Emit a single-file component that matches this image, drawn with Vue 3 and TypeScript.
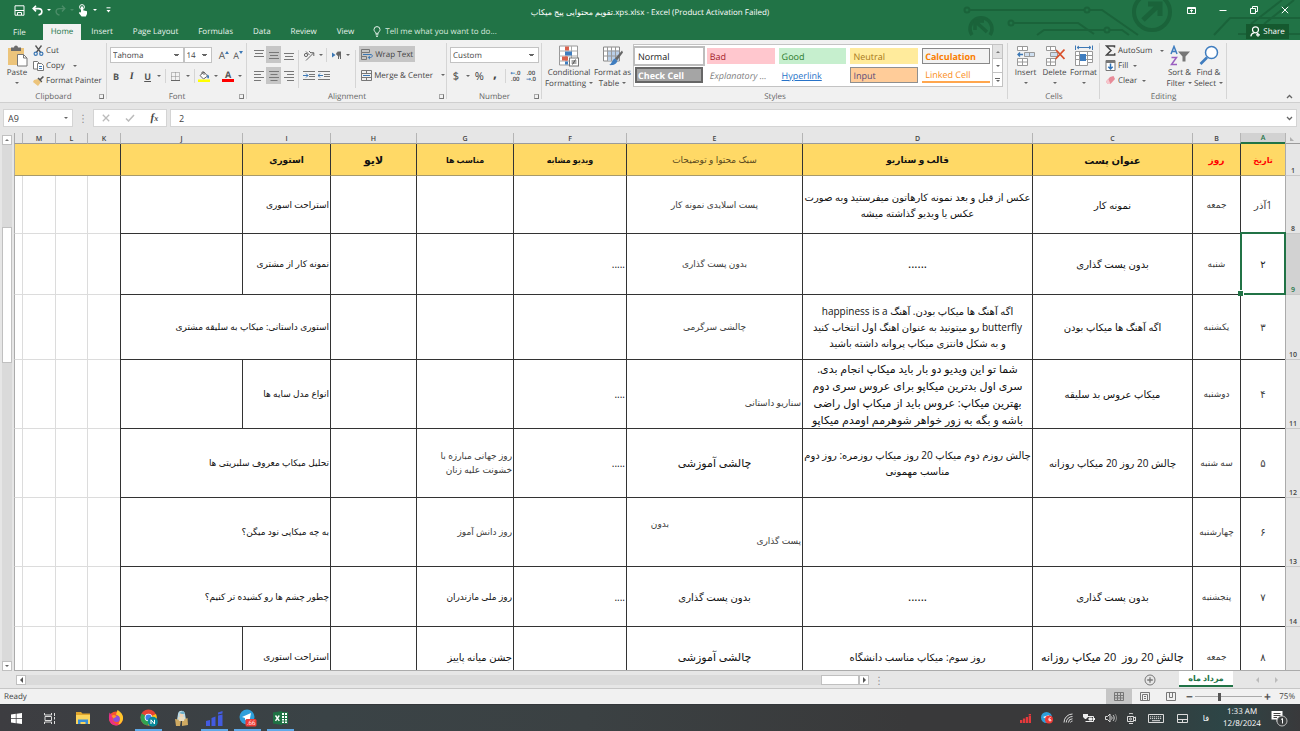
<script setup lang="ts">
import { ref } from 'vue'

interface Cell {
  lines: string[]
  cls?: string
  span?: number
}
interface Row {
  n: string
  h: number
  cells: Cell[]
}

const columns: { name: string; w: number }[] = [
  { name: 'A', w: 45 },
  { name: 'B', w: 48 },
  { name: 'C', w: 160 },
  { name: 'D', w: 230 },
  { name: 'E', w: 176 },
  { name: 'F', w: 113 },
  { name: 'G', w: 97 },
  { name: 'H', w: 86 },
  { name: 'I', w: 88 },
  { name: 'J', w: 122 },
  { name: 'K', w: 33 },
  { name: 'L', w: 32 },
  { name: 'M', w: 33 },
  { name: '', w: 8 },
]

const c = (text: string, cls = '', span = 1): Cell => ({ lines: text ? text.split('|') : [], cls, span })
const blank = (): Cell[] => [c('', 'faint'), c('', 'faint'), c('', 'faint'), c('', 'faint edge')]

const rows: Row[] = [
  {
    n: '1', h: 32,
    cells: [
      c('تاریخ', 'head red s8'), c('روز', 'head red s9'), c('عنوان پست', 'head s10'), c('قالب و سناریو', 'head s9'),
      c('سبک محتوا و توضیحات', 'yellow dim s9'), c('ویدیو مشابه', 'head s8'), c('مناسب ها', 'head s8'),
      c('لایو', 'head s11'), c('استوری', 'head s9'), c('', 'yellow'), c('', 'yellow edge', 4),
    ],
  },
  {
    n: '8', h: 58,
    cells: [
      c('1آذر', 's10 soft'), c('جمعه', 's9 soft'), c('نمونه کار', 's10'),
      c('عکس از قبل و بعد نمونه کارهاتون میفرستید وبه صورت|عکس یا ویدیو گذاشته میشه', 's10 l16'),
      c('پست اسلایدی نمونه کار', 's9 soft'), c(''), c(''), c(''), c('استراحت اسوری', 's9 start'), c(''), ...blank(),
    ],
  },
  {
    n: '9', h: 61,
    cells: [
      c('۲', 's10 selected'), c('شنبه', 's9 soft'), c('بدون پست گذاری', 's10'), c('......', 's12'),
      c('بدون پست گذاری', 's9 soft'), c('.....', 's10 start'), c(''), c(''), c('نمونه کار از مشتری', 's9 start'), c(''), ...blank(),
    ],
  },
  {
    n: '10', h: 65,
    cells: [
      c('۳', 's10 soft'), c('یکشنبه', 's9 soft'), c('اگه آهنگ ها میکاپ بودن', 's10'),
      c('اگه آهنگ ها میکاپ بودن. آهنگ happiness is a|butterfly رو میتونید به عنوان اهنگ اول انتخاب کنید|و به شکل فانتزی میکاپ پروانه داشته باشید', 's10 l16'),
      c('چالشی سرگرمی', 's9 soft'), c(''), c(''), c(''), c('استوری داستانی: میکاپ به سلیقه مشتری', 's9 start', 2), ...blank(),
    ],
  },
  {
    n: '11', h: 69,
    cells: [
      c('۴', 's10 soft'), c('دوشنبه', 's9 soft'), c('میکاپ عروس بد سلیقه', 's10'),
      c('شما تو این ویدیو دو بار باید میکاپ انجام بدی.|سری اول بدترین میکاپو برای عروس سری دوم|بهترین میکاپ: عروس باید از میکاپ اول راضی|باشه و بگه به زور خواهر شوهرمم اومدم میکاپو', 's11 l17'),
      c('\u00a0|سناریو داستانی', 's9 soft start l17'), c('....', 's10 start'), c(''), c(''), c('انواع مدل سایه ها', 's9 start'), c(''), ...blank(),
    ],
  },
  {
    n: '12', h: 69,
    cells: [
      c('۵', 's10 soft'), c('سه شنبه', 's9 soft'), c('چالش 20 روز 20 میکاپ روزانه', 's10'),
      c('چالش روزم دوم میکاپ 20 روز میکاپ روزمره: روز دوم|مناسب مهمونی', 's10 l16'),
      c('چالشی آموزشی', 's11'), c('.....', 's10 start'), c('روز جهانی مبارزه با|خشونت علیه زنان', 's9 soft start l14'),
      c(''), c('تحلیل میکاپ معروف سلبریتی ها', 's9 start', 2), ...blank(),
    ],
  },
  {
    n: '13', h: 69,
    cells: [
      c('۶', 's10 soft'), c('چهارشنبه', 's9 soft'), c(''), c(''),
      c('بدون|پست گذاری', 's9 soft start l17 indent'), c(''), c('روز دانش آموز', 's9 soft start'), c(''),
      c('به چه میکاپی نود میگن؟', 's9 start', 2), ...blank(),
    ],
  },
  {
    n: '14', h: 60,
    cells: [
      c('۷', 's10 soft'), c('پنجشنبه', 's9 soft'), c('بدون پست گذاری', 's10'), c('......', 's12'),
      c('بدون پست گذاری', 's10'), c('....', 's10 start'), c('روز ملی مازندران', 's9 start'), c(''),
      c('چطور چشم ها رو کشیده تر کنیم؟', 's9 start', 2), ...blank(),
    ],
  },
  {
    n: '', h: 60,
    cells: [
      c('۸', 's10 soft'), c('جمعه', 's9 soft'), c('چالش 20 روز\u00a0 20 میکاپ روزانه', 's11'),
      c('روز سوم: میکاپ مناسب دانشگاه', 's10'), c('چالشی آموزشی', 's11'), c(''), c('جشن میانه پاییز', 's10 start'), c(''),
      c('استراحت استوری', 's9 start'), c(''), ...blank(),
    ],
  },
]

const tabs = ['File', 'Home', 'Insert', 'Page Layout', 'Formulas', 'Data', 'Review', 'View']
const activeTab = ref('Home')
const swatches: { t: string; k: string }[] = [
  { t: 'Normal', k: 'normal' }, { t: 'Bad', k: 'bad' }, { t: 'Good', k: 'good' }, { t: 'Neutral', k: 'neutral' }, { t: 'Calculation', k: 'calc' },
  { t: 'Check Cell', k: 'check' }, { t: 'Explanatory ...', k: 'expl' }, { t: 'Hyperlink', k: 'hyper' }, { t: 'Input', k: 'inp' }, { t: 'Linked Cell', k: 'linked' },
]
const nameBox = ref('A9')
const formula = ref('2')
const zoom = ref(36)
</script>

<template>
  <div class="app">
    <header class="top">
      <svg class="circuit" width="340" height="40" viewBox="0 0 340 40" fill="none" stroke="#1a633a" stroke-width="2" aria-hidden="true">
        <circle cx="7" cy="10" r="2.5" /><path d="M10 10H124M130 10H142L178 35" /><circle cx="127" cy="10" r="2.5" />
        <circle cx="51" cy="23" r="2.5" /><path d="M54 23H118L134 34M77 35L84 30H144M150 30H162L169 35" /><circle cx="147" cy="30" r="2.5" />
        <path d="M12 35A11 11 0 1 1 30 35" stroke-width="3.5" /><path d="M27 32L16 22M15 30V21H24" stroke-width="3.5" />
        <circle cx="192" cy="12" r="18" stroke-width="4" /><path d="M183 20L200 4M188 4H200V16" stroke-width="5" />
        <path d="M254 35L270 18H340M291 24L322 0M304 24L334 0M278 34H340" />
      </svg>
      <div class="titlebar">
        <div class="quick">
          <button aria-label="Save"><svg width="11" height="11" viewBox="0 0 11 11" fill="none" stroke="#fff"><path d="M1 .8H10V10.2H1ZM1 5.5H10M3.5 10V7.5H7.5V10" /></svg></button>
          <button aria-label="Undo"><svg width="11" height="11" viewBox="0 0 11 11" fill="none" stroke="#fff" stroke-width="1.6"><path d="M4 .8L1.2 3.6L4 6.4M1.5 3.6H6.5C11 3.6 11 9.5 6.5 10" /></svg></button>
          <i class="caret light"></i>
          <button aria-label="Redo" class="off"><svg width="11" height="11" viewBox="0 0 11 11" fill="none" stroke="#4b8d68" stroke-width="1.4"><path d="M7 .8L9.8 3.6L7 6.4M9.5 3.6H4.5C0 3.6 0 9.5 4.5 10" /></svg></button>
          <i class="caret dull"></i>
          <button aria-label="Touch mode"><svg width="11" height="13" viewBox="0 0 11 13"><circle cx="4" cy="3" r="2.4" fill="none" stroke="#fff" /><path d="M3 2.5H5.1V6.2L9 7.2V10L7.8 12.6H3.6L.8 9L2 7.8L3 8.7Z" fill="#fff" /></svg></button>
          <i class="caret light"></i>
          <button class="custom" aria-label="Customize"><svg width="5" height="6" viewBox="0 0 5 6"><path d="M.5 .8H4.5" stroke="#fff" /><path d="M.5 3H4.5L2.5 5.4Z" fill="#fff" /></svg></button>
        </div>
        <div class="title">تقویم محتوایی پیج میکاپ.xps.xlsx - Excel (Product Activation Failed)</div>
        <div class="winbtns">
          <button aria-label="Ribbon options"><svg width="9" height="7" viewBox="0 0 9 7" fill="none" stroke="#fff"><path d="M.5 .5H8.5V6.5H.5ZM.5 1.5H8.5M4.5 5.5V3M3 4L4.5 2.8L6 4" /></svg></button>
          <button aria-label="Minimize"><svg width="8" height="8" viewBox="0 0 8 8"><path d="M.5 4.5H7.5" stroke="#fff" /></svg></button>
          <button aria-label="Restore"><svg width="8" height="8" viewBox="0 0 8 8" fill="none" stroke="#fff"><path d="M.5 2.5H5.5V7.5H.5ZM2.5 2V.5H7.5V5.5H6" /></svg></button>
          <button aria-label="Close"><svg width="8" height="8" viewBox="0 0 8 8"><path d="M.8 .8L7.2 7.2M7.2 .8L.8 7.2" stroke="#fff" /></svg></button>
        </div>
      </div>
      <nav class="tabs">
        <button v-for="t in tabs" :key="t" :class="['tab', { on: t === activeTab, file: t === 'File' }]" @click="activeTab = t">{{ t }}</button>
        <button class="tell"><svg width="8" height="11" viewBox="0 0 8 11" fill="none" stroke="#e8f2ec"><path d="M2.6 7.3C2.6 5.8 1 5.4 1 3.6A3 3 0 0 1 7 3.6C7 5.4 5.4 5.8 5.4 7.3ZM2.6 8.8H5.4M3 10.3H5" /></svg>Tell me what you want to do...</button>
        <button class="share"><svg width="11" height="11" viewBox="0 0 11 11" fill="none" stroke="#fff" stroke-width="1.2"><circle cx="5.5" cy="3.8" r="3" /><path d="M.8 10.4C1.2 8 3 6.8 4.5 6.6M6.5 6.6L8 7.8M8 6.8V10.8M6 8.8H10" /></svg>Share</button>
      </nav>
    </header>

    <section class="ribbon">
      <div class="group g-clip">
        <div class="body">
          <button class="big paste">
            <svg width="21" height="22" viewBox="0 0 21 22"><rect x="1" y="3" width="16" height="17" fill="#ecc47b" /><path d="M4 2.5H7C7-.3 11-.3 11 2.5H14V6H4Z" fill="#6b6b6b" /><path d="M10.5 9.5H16.5L20 13V21H10.5Z" fill="#fff" stroke="#777" /><path d="M16.5 9.5V13H20" fill="none" stroke="#777" /></svg>
            <span>Paste</span><i class="caret"></i>
          </button>
          <div class="stack">
            <button class="mini"><svg width="10" height="11" viewBox="0 0 10 11" fill="none"><path d="M2 .5L7.2 7.5M8 .5L2.8 7.5" stroke="#555" stroke-width="1.3" /><circle cx="2.2" cy="8.8" r="1.6" stroke="#3c78b5" stroke-width="1.2" /><circle cx="7.8" cy="8.8" r="1.6" stroke="#3c78b5" stroke-width="1.2" /></svg>Cut</button>
            <button class="mini"><svg width="11" height="10" viewBox="0 0 11 10" fill="#fff" stroke="#777"><path d="M.5 .5H4.5L6 2V8H.5Z" /><path d="M4.5 2.5H8.5L10.5 4.5V9.5H4.5Z" /><path d="M6 5.5H9M6 7.5H9" stroke="#3c78b5" /></svg>Copy<i class="caret gap"></i></button>
            <button class="mini"><svg width="11" height="10" viewBox="0 0 11 10"><path d="M1 4L5 3L8 6L5 10L0 6Z" fill="#ecc47b" /><path d="M4.5 2.5L8.5 6.5L9.3 5.6L8 4L11 1L9.8 0L7 2.8L5.5 1.5Z" fill="#555" /></svg>Format Painter</button>
          </div>
        </div>
        <footer>Clipboard</footer><i class="launch"></i>
      </div>

      <div class="group g-font">
        <div class="body rowsbody">
          <div class="line">
            <select class="combo w74" aria-label="Font"><option>Tahoma</option></select>
            <select class="combo w29" aria-label="Font size"><option>14</option></select>
            <button class="ic wide" aria-label="Increase font size"><b class="bigA">A</b><svg width="4" height="9" viewBox="0 0 4 9"><path d="M0 3L2 0L4 3Z" fill="#3c78b5" /></svg></button>
            <button class="ic" aria-label="Decrease font size"><b class="smallA">A</b><svg width="4" height="9" viewBox="0 0 4 9"><path d="M0 0H4L2 3Z" fill="#3c78b5" /></svg></button>
          </div>
          <div class="line second">
            <button class="ic"><b>B</b></button><button class="ic"><em>I</em></button><button class="ic"><u>U</u></button><i class="caret"></i><i class="vs"></i>
            <button class="ic" aria-label="Borders"><svg width="9" height="9" viewBox="0 0 9 9" fill="none"><path d="M.5 .5H8.5V8.5H.5ZM4.5 .5V8.5M.5 4.5H8.5" stroke="#888" stroke-dasharray="1 1" /><path d="M0 8.5H9" stroke="#666" /></svg></button><i class="caret"></i><i class="vs"></i>
            <button class="ic" aria-label="Fill color"><svg width="12" height="11" viewBox="0 0 12 11"><path d="M2 4.5L6 1L9.5 5L5.5 8Z" fill="#fff" stroke="#666" /><path d="M4 3V1H6V4" fill="none" stroke="#666" /><path d="M9.5 3.5C12 5 11 7.5 10 7.5C9 7.5 9 5 9.5 3.5Z" fill="#3c78b5" /><rect y="8.5" width="12" height="2.5" fill="#ff0" /></svg></button><i class="caret"></i>
            <button class="ic fontcolor"><b>A</b></button><i class="caret"></i>
          </div>
        </div>
        <footer>Font</footer><i class="launch"></i>
      </div>

      <div class="group g-align">
        <div class="body alignbody">
          <div class="pad3">
            <button class="ic a" aria-label="Top align"><svg width="10" height="10" viewBox="0 0 10 10" stroke="#777"><path d="M0 .5H10M1 3.5H9M0 6.5H10" /></svg></button>
            <button class="ic a sel" aria-label="Middle align"><svg width="10" height="10" viewBox="0 0 10 10" stroke="#777"><path d="M0 2.5H10M1 5.5H9M0 8.5H10" /></svg></button>
            <button class="ic a" aria-label="Bottom align"><svg width="10" height="10" viewBox="0 0 10 10" stroke="#777"><path d="M0 3.5H10M1 6.5H9M0 9.5H10" /></svg></button>
            <button class="ic a" aria-label="Align left"><svg width="10" height="10" viewBox="0 0 10 10" stroke="#777"><path d="M0 .5H10M0 3.5H7M0 6.5H10M0 9.5H7" /></svg></button>
            <button class="ic a sel" aria-label="Center"><svg width="10" height="10" viewBox="0 0 10 10" stroke="#777"><path d="M0 .5H10M1.5 3.5H8.5M0 6.5H10M1.5 9.5H8.5" /></svg></button>
            <button class="ic a" aria-label="Align right"><svg width="10" height="10" viewBox="0 0 10 10" stroke="#777"><path d="M0 .5H10M3 3.5H10M0 6.5H10M3 9.5H10" /></svg></button>
          </div>
          <i class="vs tall"></i>
          <div class="mid">
            <div class="line">
              <button class="ic" aria-label="Orientation"><svg width="12" height="11" viewBox="0 0 12 11" fill="none" stroke="#666"><path d="M3 10.5L10.5 3M10.8 6V2.700H7.500" /><circle cx="3" cy="5" r="1.600" /><path d="M3 1.500L6.500 5M6 1L8 3" /></svg></button><i class="caret"></i>
              <i class="vs"></i>
              <button class="ic" aria-label="Text direction"><svg width="11" height="9" viewBox="0 0 11 9"><path d="M1 1.500V6.500L4.500 4Z" fill="#3c78b5" /><path d="M7.500 8V1H10M9.500 8V1M7.500 1C5 1 5 4.500 7.500 4.500Z" stroke="#666" fill="#666" /></svg></button><i class="caret"></i>
            </div>
            <div class="line second">
              <button class="ic" aria-label="Decrease indent"><svg width="12" height="9" viewBox="0 0 12 9" stroke="#777"><path d="M0 .5H12M6 3.500H12M6 5.500H12M0 8.500H12" /><path d="M0 4.500H5M3 2.500L5 4.500L3 6.500" stroke="#3c78b5" fill="none" /></svg></button>
              <button class="ic" aria-label="Increase indent"><svg width="12" height="9" viewBox="0 0 12 9" stroke="#777"><path d="M0 .5H12M6 3.500H12M6 5.500H12M0 8.500H12" /><path d="M5 4.500H0M2 2.500L0 4.500L2 6.500" stroke="#3c78b5" fill="none" /></svg></button>
            </div>
          </div>
          <i class="vs tall"></i>
          <div class="wraps">
            <button class="mini sel"><svg width="12" height="11" viewBox="0 0 12 11" fill="none" stroke="#777"><path d="M.5 .5H8.500V3.500H.5ZM.5 3.500V10.500H5.500V7.500H.5" /><path d="M2 5.500H10C12 5.500 11.500 8.500 9.500 8.500H7.500M9 6.800L7.300 8.500L9 10.200" stroke="#3c78b5" /></svg>Wrap Text</button>
            <button class="mini"><svg width="11" height="11" viewBox="0 0 11 11" fill="none" stroke="#777"><path d="M.5 .5H10.500V10.500H.5ZM.5 3.500H10.500M.5 7.500H10.500M5.500 .5V3.500M5.500 7.500V10.500" /><path d="M2 5.500H9" stroke="#3c78b5" /></svg>Merge &amp; Center<i class="caret gap"></i></button>
          </div>
        </div>
        <footer>Alignment</footer><i class="launch"></i>
      </div>

      <div class="group g-num">
        <div class="body rowsbody">
          <div class="line"><select class="combo full" aria-label="Number format"><option>Custom</option></select></div>
          <div class="line second nums">
            <button class="ic sym">$</button><i class="caret"></i><button class="ic sym">%</button><button class="ic comma">,</button><i class="vs"></i>
            <button class="ic dec"><span><i class="blue">←</i>.0</span><span>.00</span></button>
            <button class="ic dec"><span>.00</span><span><i class="blue">→</i>.0</span></button>
          </div>
        </div>
        <footer>Number</footer><i class="launch"></i>
      </div>

      <div class="group g-styles">
        <div class="body">
          <button class="big w46"><svg width="20" height="21" viewBox="0 0 20 21"><path d="M.5 .5H18.500V19.500H.5Z" fill="#fff" stroke="#999" /><path d="M.5 5.500H18.500M.5 10.500H18.500M.5 15.500H18.500M12.500 .5V19.500" stroke="#aaa" /><path d="M6 1H10V5H6ZM3 11H8V15H3Z" fill="#d9614c" /><path d="M6 6H13V10H6Z" fill="#3f7dbf" /><path d="M6 11H9V15H6ZM6 1V19" fill="#d9614c" /><path d="M6 16H9V19H6Z" fill="#3f7dbf" /><rect x="10.500" y="12.500" width="9" height="8" fill="#fff" stroke="#777" /><path d="M12.500 15.500H17.500M12.500 17.500H17.500M16.500 14L13.500 19" stroke="#555" /></svg><span>Conditional</span><span>Formatting<i class="caret gap2"></i></span></button>
          <button class="big w40"><svg width="20" height="21" viewBox="0 0 20 21"><path d="M.5 1.500H16.500V15.500H.5Z" fill="#fff" stroke="#888" /><path d="M4 5H16V15H4Z" fill="#b9cfe8" /><path d="M.5 5.500H16.500M.5 10.500H16.500M4.500 1.500V15.500M8.500 1.500V15.500M12.500 1.500V15.500" stroke="#999" /><path d="M19 5L20 7L14 15L12 13Z" fill="#666" /><path d="M12 13L14.500 15.500C13 19.500 9 20 6 19.500C9 18.500 9 14 12 13Z" fill="#3f7dbf" /></svg><span>Format as</span><span>Table<i class="caret gap2"></i></span></button>
          <div class="gallery">
            <div class="swatches"><button v-for="s in swatches" :key="s.t" :class="['sw', s.k]">{{ s.t }}</button></div>
            <div class="galbtns"><button class="dis" aria-label="Scroll up"><i class="caret up"></i></button><button aria-label="Scroll down"><i class="caret"></i></button><button aria-label="More styles"><i class="bar"></i><i class="caret"></i></button></div>
          </div>
        </div>
        <footer>Styles</footer>
      </div>

      <div class="group g-cells">
        <div class="body">
          <button class="big w29"><svg width="19" height="20" viewBox="0 0 19 20" fill="#fff" stroke="#999"><path d="M1.500 .5H11.500V4.500H1.500ZM6.500 .5V4.500M1.500 12.500H11.500V19.500H1.500ZM6.500 12.500V19.500M1.500 16H11.500" /><path d="M8.500 6.500H18.500V10.500H8.500ZM13.500 6.500V10.500" fill="#cfdff0" /><path d="M7 8.500H2M4 6.500L2 8.500L4 10.500" stroke="#3c78b5" stroke-width="1.400" fill="none" /></svg><span>Insert</span><i class="caret"></i></button>
          <button class="big w29"><svg width="20" height="20" viewBox="0 0 20 20" fill="#fff" stroke="#999"><path d="M1.500 .5H10.500V4.500H1.500ZM5.500 .5V4.500M1.500 12.500H10.500V19.500H1.500ZM5.500 12.500V19.500M1.500 16H10.500" /><path d="M5.500 6.500H12.500V10.500H5.500Z" fill="#cfdff0" /><path d="M11 4L19.500 13M19.500 3.500L10.500 13" stroke="#d9512c" stroke-width="1.800" /></svg><span>Delete</span><i class="caret"></i></button>
          <button class="big w29"><svg width="20" height="22" viewBox="0 0 20 22" fill="#fff" stroke="#999"><path d="M1.500 6.500H18.500V17.500H13.500V20.500H1.500ZM1.500 10.500H18.500M1.500 14.500H18.500M5.500 6.500V20.500M13.500 6.500V17.500" /><rect x="6" y="9" width="6" height="7" fill="#3f7dbf" stroke="none" /><path d="M1.500 .5V5M18.500 .5V5M3 2.500H17M5 1L3 2.500L5 4M15 1L17 2.500L15 4" stroke="#3c78b5" fill="none" /></svg><span>Format</span><i class="caret"></i></button>
        </div>
        <footer>Cells</footer>
      </div>

      <div class="group g-edit">
        <div class="body">
          <div class="stack edits">
            <button class="mini"><svg width="10" height="11" viewBox="0 0 10 11" fill="none" stroke="#444" stroke-width="1.500"><path d="M9 2.500V1H1L5.500 5.500L1 10H9.200V8.200" /></svg>AutoSum<i class="caret gap"></i></button>
            <button class="mini"><svg width="10" height="11" viewBox="0 0 10 11" fill="#fff" stroke="#777"><path d="M.5 .5H9.500V10.500H.5Z" /><path d="M.5 2H9.500" stroke-width="2" /><path d="M5 3.500V9M2.800 6.700L5 9L7.200 6.700" stroke="#2f72b8" stroke-width="1.500" fill="none" /></svg>Fill<i class="caret gap2"></i></button>
            <button class="mini"><svg width="10" height="9" viewBox="0 0 10 9"><path d="M4.500 1L8 0L9.500 3L5 8H2L.5 5.500Z" fill="#e88b98" /><path d="M.5 5.500L2 8H5L2.800 3Z" fill="#f6c7cd" /></svg>Clear<i class="caret gap2"></i></button>
          </div>
          <button class="big w29"><svg width="20" height="21" viewBox="0 0 20 21" fill="none"><path d="M1 8.500L4 1L7 8.500M2 6H6" stroke="#3f7dbf" stroke-width="1.500" /><path d="M1.500 12H6.500L1.500 19H7" stroke="#9a5fc0" stroke-width="1.500" /><path d="M8 6H20L15.500 11V16H12.500V11Z" fill="#777" /></svg><span>Sort &amp;</span><span>Filter<i class="caret gap2"></i></span></button>
          <button class="big w30"><svg width="20" height="21" viewBox="0 0 20 21" fill="none"><circle cx="12.500" cy="7" r="6" stroke="#3f7dbf" stroke-width="1.500" fill="#fff" /><path d="M8 12L1.500 18.500" stroke="#3f7dbf" stroke-width="2.600" /></svg><span>Find &amp;</span><span>Select<i class="caret gap2"></i></span></button>
        </div>
        <footer>Editing</footer>
      </div>
      <div class="tail"><button aria-label="Collapse the ribbon"><svg width="7" height="5" viewBox="0 0 7 5" fill="none" stroke="#666" stroke-width="1.300"><path d="M1 4L3.500 1.500L6 4" /></svg></button></div>
    </section>

    <section class="fbar">
      <div class="namebox"><input v-model="nameBox" aria-label="Name box" /><i class="caret"></i></div>
      <span class="dots">⋮</span>
      <div class="fbtns">
        <button aria-label="Cancel"><svg width="8" height="8" viewBox="0 0 8 8"><path d="M.8 .8L7.200 7.200M7.200 .8L.8 7.200" stroke="#bbb" stroke-width="1.300" /></svg></button>
        <button aria-label="Enter"><svg width="10" height="8" viewBox="0 0 10 8"><path d="M1 4.500L3.500 7L9 1" stroke="#bbb" stroke-width="1.500" fill="none" /></svg></button>
        <button class="fx" aria-label="Insert function">f<sub>x</sub></button>
      </div>
      <div class="formula"><input v-model="formula" aria-label="Formula" /><svg width="7" height="5" viewBox="0 0 7 5" fill="none" stroke="#666" stroke-width="1.300"><path d="M1 1L3.500 3.500L6 1" /></svg></div>
    </section>

    <main class="sheet">
      <div class="vscroll"><button aria-label="Scroll up"><i class="caret up"></i></button><span class="before"></span><span class="thumb"></span><span class="after"></span><button aria-label="Scroll down"><i class="caret"></i></button></div>
      <div class="gridwrap">
        <table dir="rtl">
          <colgroup><col style="width: 15px" /><col v-for="(col, i) in columns" :key="i" :style="{ width: col.w + 'px' }" /></colgroup>
          <thead><tr><th class="corner"></th><th v-for="(col, i) in columns" :key="i" :class="{ cur: col.name === 'A' }">{{ col.name }}</th></tr></thead>
          <tbody>
            <tr v-for="(r, ri) in rows" :key="ri" :style="{ height: r.h + 'px' }">
              <th :class="{ cur: r.n === '9' }">{{ r.n }}</th>
              <td v-for="(cell, i) in r.cells" :key="i" :class="cell.cls" :colspan="cell.span">
                <div v-for="(l, k) in cell.lines" :key="k" class="ln">{{ l }}</div>
              </td>
            </tr>
          </tbody>
        </table>
      </div>
    </main>

    <div class="sheetbar">
      <div class="hscroll"><button aria-label="Scroll left"><i class="caret left"></i></button><span class="track"></span><span class="hthumb"></span><button aria-label="Scroll right"><i class="caret right"></i></button></div>
      <span class="dots hd">⋮</span>
      <button class="add" aria-label="New sheet"><svg width="12" height="12" viewBox="0 0 12 12" fill="none" stroke="#777"><circle cx="6" cy="6" r="5" /><path d="M6 3.200V8.800M3.200 6H8.800" stroke-width="1.300" /></svg></button>
      <button class="stab">مرداد ماه</button>
      <span class="navs"><i class="caret left pale"></i><i class="caret right pale"></i></span>
    </div>

    <div class="status">
      <span class="ready">Ready</span>
      <button class="view on" aria-label="Normal view"><svg width="10" height="9" viewBox="0 0 10 9" fill="none" stroke="#777"><path d="M.5 .5H9.500V8.500H.5ZM3.500 .5V8.500M6.500 .5V8.500M.5 3.500H9.500M.5 6H9.500" /></svg></button>
      <button class="view" aria-label="Page layout view"><svg width="10" height="9" viewBox="0 0 10 9" fill="none" stroke="#777"><path d="M.5 .5H9.500V8.500H.5ZM2.500 2.500H7.500V8.500M2.500 2.500V8.500M4 4.500H6M4 6.500H6" /></svg></button>
      <button class="view" aria-label="Page break view"><svg width="10" height="9" viewBox="0 0 10 9" fill="none" stroke="#777"><path d="M.5 8.500V.5H9.500V8.500ZM3.500 .5V5.500H6.500V.5" /></svg></button>
      <button class="zb" aria-label="Zoom out">−</button>
      <input v-model="zoom" class="range" type="range" min="0" max="100" aria-label="Zoom" />
      <button class="zb" aria-label="Zoom in">+</button>
      <span class="pct">75%</span>
    </div>

    <footer class="taskbar">
      <div class="apps">
        <button aria-label="Start"><svg width="11" height="11" viewBox="0 0 11 11" fill="#fff"><path d="M0 1.500L4.800 .8V5.200H0ZM5.500 .7L11 0V5.200H5.500ZM0 5.900H4.800V10.300L0 9.600ZM5.500 5.900H11V11L5.500 10.300Z" /></svg></button>
        <button aria-label="Task view"><svg width="12" height="11" viewBox="0 0 12 11" fill="none" stroke="#ddd"><path d="M.5 0V2H7.500V0M.5 11V9H7.500V11M1 3.500H7.500V7.500H1ZM10.500 0V3M10.500 4V6.500M10.500 8V11" /></svg></button>
        <button aria-label="File Explorer"><svg width="16" height="14" viewBox="0 0 16 14"><path d="M1 1H6L7.500 2.500H15V13H1Z" fill="#e0a52c" /><path d="M1 4H15V13H1Z" fill="#fbd45c" /><path d="M3 13V8.500H13V13H10.500V11H5.500V13Z" fill="#3a8fd6" /></svg></button>
        <button aria-label="Firefox"><svg width="16" height="16" viewBox="0 0 16 16"><circle cx="8" cy="8.500" r="7" fill="#f7532f" /><path d="M9.500 0C13 2 15.500 5 15 9C14.500 12 12.500 14 10 15C13 10 12 6 8 4.500Z" fill="#ffc62b" /><path d="M1.500 2.500C1 5 .5 8 1.500 11C3 15 8 16.500 11.500 14.500C7 15 3 11 5 6L3.500 5Z" fill="#e8308a" /><circle cx="8.500" cy="8.700" r="3.300" fill="#8a4fe0" /><path d="M3.500 6C5 4.500 7 5 8.500 6.500L5.500 8.500Z" fill="#ff9528" /></svg></button>
        <button class="open" aria-label="Chrome"><svg width="18" height="18" viewBox="0 0 18 18"><circle cx="8.500" cy="8.500" r="8" fill="#e64335" /><path d="M8.500 8.500L1.600 4.500A8 8 0 0 0 8.500 16.500Z" fill="#32a350" /><path d="M8.500 8.500L16 5A8 8 0 0 1 8.500 16.500Z" fill="#fbc116" /><circle cx="8.500" cy="8.500" r="3.800" fill="#fff" /><circle cx="8.500" cy="8.500" r="3" fill="#3e7fe8" /><circle cx="12.800" cy="12.800" r="5" fill="#08899a" /><path d="M11 15V10.800L14.500 15V10.800" stroke="#fff" fill="none" /></svg></button>
        <button aria-label="Store"><svg width="15" height="17" viewBox="0 0 15 17"><path d="M4 4C4-.5 11-.5 11 4L12 10H3Z" fill="#b9dce9" /><circle cx="7.500" cy="5" r="2.200" fill="#f1d2b4" /><path d="M5 3L9 1L11 4L8 4Z" fill="#6daec9" /><path d="M1 9L7 10L6 16H2ZM8 10L13.500 8L14 15L8 16Z" fill="#cfaa62" /><path d="M4 7H11L10 11H5Z" fill="#e8dcc0" /></svg></button>
        <button class="open" aria-label="Signal"><svg width="17" height="15" viewBox="0 0 17 15" fill="#435be0"><path d="M0 10L4 9V15H0ZM5.500 7L9.500 5.500V15H5.500ZM12 4.500L16.500 3.500V15H12ZM12 1.500L16.500 0V2.500L12 3.500Z" /></svg></button>
        <button class="open" aria-label="Telegram"><svg width="18" height="18" viewBox="0 0 18 18"><circle cx="8" cy="8" r="7.500" fill="#2e9fdb" /><path d="M3 8L12 4L10.500 12L7.500 10L6 11.500V9Z" fill="#fff" /><rect x="6.500" y="10" width="11" height="7.500" rx="1.500" fill="#ee3b36" /></svg><span class="badge">.66</span></button>
        <button class="open" aria-label="Excel"><svg width="15" height="14" viewBox="0 0 15 14"><path d="M8 1.500H14.500V12.500H8Z" fill="#fff" stroke="#1f7244" /><path d="M8 4.500H14M8 7.500H14M8 10H14M11.500 2V12" stroke="#1f7244" /><path d="M0 1.500L9 0V14L0 12.500Z" fill="#1f7244" /><path d="M2.500 4.500L6.300 9.800M6.300 4.500L2.500 9.800" stroke="#fff" stroke-width="1.400" /></svg></button>
      </div>
      <div class="tray">
        <svg width="11" height="9" viewBox="0 0 11 9" fill="#e5393c"><path d="M0 6H2.300V9H0ZM2.900 4.500H5.200V9H2.900ZM5.800 3H8.100V9H5.800ZM8.700 1.800H11V9H8.700ZM8.700 0H11V1.200H8.700Z" /></svg>
        <svg width="12" height="12" viewBox="0 0 12 12"><circle cx="5.500" cy="5.500" r="5.500" fill="#2e9fdb" /><path d="M2 5L8 3L7 8Z" fill="#fff" /><circle cx="8" cy="7.500" r="4" fill="#ee3b36" /><path d="M9.500 5.500C7.500 5.500 7.500 9 9 9C10.500 9 10 7 8.500 7.500" fill="none" stroke="#fff" /></svg>
        <svg width="10" height="10" viewBox="0 0 10 10" fill="none" stroke="#ddd"><path d="M1 9.500A8.500 8.500 0 0 1 9.500 1M3.200 9.500A6.300 6.300 0 0 1 9.500 3.500M5.400 9.500A4 4 0 0 1 9.500 5.800M7.500 9.500A2 2 0 0 1 9.500 8" /></svg>
        <svg width="12" height="8" viewBox="0 0 12 8" fill="none" stroke="#eee"><path d="M3.500 2.500H10.500V7.500H2.500M11.500 4V6" /><path d="M0 0H5V3L3 5H2L0 3Z" fill="#eee" stroke="none" /><path d="M6 4H9V6H6Z" fill="#eee" /></svg>
        <svg width="12" height="10" viewBox="0 0 12 10" fill="none" stroke="#ddd"><path d="M.5 3.500H2.500L5 1V9L2.500 6.500H.5ZM6.500 3.500C7.200 4.500 7.200 5.500 6.500 6.500M8.200 2.200C9.500 4 9.500 6 8.200 7.800" /><path d="M10 1C12 3.500 12 6.500 10 9" stroke="#888" /></svg>
        <svg width="9" height="11" viewBox="0 0 9 11" fill="none" stroke="#ddd"><path d="M.5 3.500H6.500V8.500H.5ZM6.500 5L8.500 4V8L6.500 7M2 1C3 0 5 0 6 1M2 10.500H6" /><circle cx="3.500" cy="6" r="1" /></svg>
        <svg class="kb" width="16" height="9" viewBox="0 0 16 9" fill="none" stroke="#ddd"><path d="M.5 .5H15.500V8.500H.5Z" /><path d="M2 2.800H14M2 4.600H14" stroke-dasharray="1.200 .8" /><path d="M4 6.700H12" /></svg>
        <svg class="tp" width="11" height="9" viewBox="0 0 11 9" fill="none" stroke="#ddd"><path d="M.5 .5H10.500V8.500H.5ZM.5 5.500H10.500M5.500 5.500V8.500" /></svg>
        <span class="lang">فا</span>
        <span class="clock">1:33 AM<br />12/8/2024</span>
        <svg class="note" width="17" height="17" viewBox="0 0 17 17"><path d="M.5 1H11.500V9.500H7.500L5.500 12V9.500H.5Z" fill="#fff" /><path d="M2.500 3.500H9.500M2.500 5.500H9.500M2.500 7.500H6" stroke="#444" /><circle cx="11" cy="11" r="5" fill="#3c3f40" stroke="#bbb" /><path d="M10 9.500L11.500 8.500V13.500" stroke="#fff" fill="none" /></svg>
      </div>
    </footer>
  </div>
</template>

<style>
html, body { margin: 0; overflow: hidden; }
</style>

<style scoped>
* { box-sizing: border-box; }
.app { display: flex; flex-direction: column; height: 100vh; min-height: 400px; background: #e6e6e6; font-family: "Open Sans", "DejaVu Sans", sans-serif; font-size: 8px; color: #444; line-height: 11px; text-rendering: geometricPrecision; }
button { border: 0; padding: 0; margin: 0; background: none; font: inherit; color: inherit; text-rendering: inherit; display: flex; align-items: center; white-space: nowrap; }
svg { flex: none; display: block; }
.caret { width: 0; height: 0; border: 2px solid transparent; border-top-color: #666; border-bottom-width: 0; flex: none; }
.caret.light { border-top-color: #fff; }
.caret.dull { border-top-color: #4b8d68; }
.caret.up { border: 2px solid transparent; border-bottom-color: #777; border-top-width: 0; }
.caret.left { border: 3px solid transparent; border-right-color: #555; border-left-width: 0; }
.caret.right { border: 3px solid transparent; border-left-color: #555; border-right-width: 0; }
.caret.left.pale { border-right-color: #bbb; }
.caret.right.pale { border-left-color: #bbb; }
.caret.gap { margin-left: 6px; }
.caret.gap2 { display: inline-block; margin-left: 3px; vertical-align: 2px; }

.top { position: relative; background: #217346; color: #fff; height: 40px; flex: none; }
.circuit { position: absolute; right: 0; top: 0; }
.titlebar { position: relative; display: flex; height: 24px; align-items: center; justify-content: space-between; }
.quick, .winbtns { display: flex; align-items: center; width: 140px; height: 20px; align-self: flex-start; }
.quick { padding-left: 14px; gap: 4px; }
.quick button:first-child { margin-right: 3px; }
.custom { margin-left: 5px; }
.title { text-align: center; }
.winbtns { gap: 23px; justify-content: flex-end; padding-right: 11px; }
.tabs { position: relative; display: flex; height: 16px; }
.tab { padding: 0 10px 1px; color: #eaf4ee; }
.tab.file { padding: 0 17px 0 13px; }
.tab.on { background: #f1f1f1; color: #217346; padding: 0 8px 1px; }
.tell { gap: 4px; margin-left: 9px; padding-bottom: 1px; color: #d8eadf; }
.share { margin-left: auto; margin-right: 11px; background: #15592f; width: 43px; height: 15px; gap: 2px; justify-content: center; }

.ribbon { display: flex; background: #f1f1f1; height: 63px; flex: none; border-bottom: 1px solid #cfcfcf; }
.group { position: relative; display: flex; flex-direction: column; flex: none; padding-top: 3px; }
.group::after { content: ""; position: absolute; right: 0; top: 3px; bottom: 3px; width: 1px; background: #d5d5d5; }
.body { display: flex; height: 48px; }
.group footer { text-align: center; color: #666; line-height: 11px; }
.launch { position: absolute; right: 3px; bottom: 3px; width: 5px; height: 5px; border-left: 1px solid #aaa; border-top: 1px solid #aaa; }
.launch::after { content: ""; position: absolute; right: 0; bottom: 0; border: 1px solid transparent; border-right-color: #777; border-bottom-color: #777; width: 3px; height: 3px; }
.g-clip { width: 107px; }
.g-font { width: 140px; }
.g-align { width: 200px; }
.g-num { width: 95px; }
.g-styles { flex: 1 1 466px; }
.g-cells { width: 92px; }
.g-edit { width: 127px; }
.tail { width: 73px; display: flex; align-items: flex-end; justify-content: flex-end; padding: 0 7px 3px 0; }
.big { flex-direction: column; justify-content: flex-start; padding-top: 2px; line-height: 11px; }
.big svg { height: 22px; }
.big > .caret { margin-top: 4px; }
.big.paste { width: 32px; padding-left: 2px; }
.stack { display: flex; flex-direction: column; }
.mini { height: 15px; gap: 2px; }
.stack .mini svg { width: 11px; }
.g-clip .stack { margin-left: 1px; }
.rowsbody { flex-direction: column; padding: 4px 3px 0 3px; }
.line { display: flex; align-items: center; height: 16px; }
.line.second { margin-top: 6px; height: 14px; justify-content: space-between; padding-right: 2px; }
.combo { appearance: none; height: 16px; border: 1px solid #c3c3c3; border-radius: 0; background: linear-gradient(#666, #666) no-repeat right 5px top 7px / 3px 1px, linear-gradient(#666, #666) no-repeat right 4px top 6px / 5px 1px #fff; font: inherit; text-rendering: inherit; color: #444; padding: 0 2px; margin: 0; }
.w74 { width: 75px; } .w29 { width: 29px; } .full { width: 89px; }
.ic { justify-content: center; min-width: 12px; height: 14px; }
.ic b, .ic u { font-weight: 700; font-size: 9px; color: #555; }
.ic em { font-family: "Liberation Serif", serif; font-size: 10px; font-weight: 700; }
.ic b.bigA { font-size: 10px; font-weight: 400; } .ic b.smallA { font-size: 9px; font-weight: 400; }
.ic.wide { margin-left: 6px; margin-right: 2px; }
.fontcolor b { border-bottom: 3px solid #f00; line-height: 9px; padding: 0 3px; }
.vs { width: 1px; height: 14px; background: #d5d5d5; }
.vs.tall { height: 38px; margin-top: 4px; }
.alignbody { padding: 3px 0 0 4px; }
.pad3 { display: grid; grid-template-columns: repeat(3, 15px); grid-template-rows: 17px 17px; row-gap: 4px; }
.ic.a { width: 15px; height: 17px; }
.ic.sel, .mini.sel { background: #c6c6c6; }
.pad3 + .vs { margin-left: 2px; }
.mid { width: 57px; padding: 1px 0 0 4px; }
.mid .line { justify-content: space-between; padding-right: 5px; }
.mid .line.second { justify-content: flex-start; gap: 3px; margin-top: 5px; }
.wraps { display: flex; flex-direction: column; gap: 5px; align-items: flex-start; padding-left: 3px; }
.wraps .mini { height: 16px; padding: 0 2px; }
.sym { font-size: 11px; } .comma { font-weight: 700; font-size: 14px; height: 10px; align-items: flex-start; line-height: 6px; }
.dec { flex-direction: column; font-size: 6px; line-height: 6px; font-weight: 600; }
.blue { color: #3c78b5; font-style: normal; }
.w46 { width: 46px; margin-left: 4px; } .w40 { width: 41px; } .big.w29 { width: 29px; } .w30 { width: 29px; }
.gallery { display: flex; flex: 1; margin-right: 5px; margin-top: 1px; height: 43px; border: 1px solid #c3c3c3; background: #fff; }
.swatches { flex: 1; display: grid; grid-template-columns: repeat(5, 1fr); grid-template-rows: 16px 16px; gap: 3px 4px; padding: 3px 2px 0 1px; }
.sw { padding: 0 3px; font-size: 9px; min-width: 0; overflow: hidden; }
.normal { outline: 2px solid #bdbdbd; color: #222; }
.bad { background: #ffc7ce; color: #a5232c; } .good { background: #c6efce; color: #2c7a2c; } .neutral { background: #ffeb9c; color: #a87718; }
.calc { background: #f2f2f2; border: 1px solid #888; color: #fa7d00; font-weight: 700; padding: 0 2px; }
.check { background: #a5a5a5; border: 2px solid #666; color: #fff; font-weight: 700; padding: 0 1px; }
.expl { font-style: italic; color: #7f7f7f; } .hyper { color: #2873c8; text-decoration: underline; }
.inp { background: #ffcc99; border: 1px solid #8f8f8f; color: #5a4a78; padding: 0 2px; } .linked { color: #fa8d20; border-bottom: 2px solid #ffa64d; }
.galbtns { width: 10px; display: flex; flex-direction: column; border-left: 1px solid #c3c3c3; }
.galbtns button { flex: 1; flex-direction: column; justify-content: center; gap: 1px; border-bottom: 1px solid #c3c3c3; }
.galbtns button:last-child { border: 0; } .galbtns .dis { background: #e3e3e3; } .bar { width: 5px; height: 1px; background: #666; }
.g-cells .body { padding-left: 3px; }
.edits { width: 60px; padding-left: 5px; margin-right: 5px; }

.fbar { display: flex; align-items: center; height: 30px; flex: none; padding: 0 3px; }
.namebox, .fbtns, .formula { background: #fff; border: 1px solid #d4d4d4; height: 18px; display: flex; align-items: center; }
.namebox { width: 70px; padding-right: 4px; }
.fbar input { border: 0; outline: 0; background: none; font: inherit; font-size: 9px; color: #444; flex: 1; min-width: 0; padding: 0 4px; }
.dots { width: 20px; text-align: center; color: #888; font-size: 10px; }
.fbtns { width: 74px; justify-content: space-around; margin-right: 3px; }
.fx { font-family: "Liberation Serif", serif; font-style: italic; font-weight: 700; font-size: 11px; }
.fx sub { font-size: 8px; }
.formula { flex: 1; padding-right: 3px; }
.fbar .formula input { padding-left: 8px; }

.sheet { flex: 1; min-height: 0; display: flex; overflow: hidden; }
.vscroll { width: 14px; flex: none; padding: 2px 2px 0; display: flex; flex-direction: column; }
.vscroll button, .hscroll button { width: 10px; height: 10px; background: #fff; border: 1px solid #c0c0c0; justify-content: center; flex: none; }
.before { flex: 82; background: #dadada; } .thumb { flex: 134; background: #fff; border: 1px solid #c0c0c0; } .after { flex: 299; background: #dadada; }
.gridwrap { flex: 1; min-width: 0; overflow: hidden; border-bottom: 1px solid #ababab; }
table { width: 100%; table-layout: fixed; border-collapse: separate; border-spacing: 0; text-rendering: auto; }
thead tr { height: 11px; }
th { font-weight: 600; font-size: 7px; line-height: 8px; padding: 0; color: #444; border-left: 1px solid #b5b5b5; border-bottom: 1px solid #9b9b9b; background: #e6e6e6; }
thead th { height: 11px; padding-top: 2px; }
thead th:last-child { border-left-color: #ababab; }
.corner { position: relative; }
.corner::after { content: ""; position: absolute; left: 4px; top: 4px; border: 2px solid transparent; border-left-color: #b0b0b0; border-bottom-color: #b0b0b0; }
th.cur { background: #d2d2d2; color: #217346; }
thead th.cur { border-bottom: 2px solid #217346; padding: 1px 0 0; }
tbody th { vertical-align: bottom; padding-bottom: 0; border-left-color: #ababab; border-bottom-color: #c8c8c8; }
td { background: #fff; border-left: 1px solid #333; border-bottom: 1px solid #333; padding: 0; text-align: center; vertical-align: middle; color: #111; overflow: hidden; white-space: nowrap; line-height: 14px; }
td.faint { border-color: #dcdcdc; }
td.edge { border-left-color: #ababab; }
td.head, td.yellow { background: #ffd966; border-bottom-color: #a89a6a; }
td.head { font-weight: 700; color: #111; }
td.red { color: #f00; } td.dim { color: #5a4a20; } td.soft { color: #3c3c3c; }
td.s8 { font-size: 8px; } td.s9 { font-size: 9px; } td.s10 { font-size: 10px; } td.s11 { font-size: 11px; } td.s12 { font-size: 12px; }
td.l14 { line-height: 14px; } td.l16 { line-height: 16px; } td.l17 { line-height: 17px; }
td.start { text-align: right; padding-right: 1px; }
td.indent .ln:first-child { padding-right: 132px; }
td.selected { position: relative; overflow: visible; color: #222; }
td.selected::before { content: ""; position: absolute; inset: -2px -1px -1px -1px; border: 2px solid #217346; }
td.selected::after { content: ""; position: absolute; left: -3px; bottom: -2px; width: 5px; height: 5px; background: #217346; border: solid #fff; border-width: 1px 1px 0 0; }

.sheetbar { display: flex; height: 18px; flex: none; border-bottom: 1px solid #c6c6c6; }
.hscroll { flex: 1; display: flex; margin: 4px 0 0 16px; height: 10px; }
.track { flex: 796; background: #dadada; } .hthumb { flex: 36; background: #fff; border: 1px solid #c0c0c0; }
.hd { line-height: 18px; }
.add { margin-left: 255px; }
.stab { margin-left: 23px; width: 54px; justify-content: center; background: #fff; color: #217346; font-weight: 700; font-size: 8px; height: 16px; border-bottom: 2px solid #217346; }
.navs { width: 67px; display: flex; gap: 16px; align-items: center; justify-content: center; }

.status { display: flex; align-items: center; height: 15px; flex: none; background: #f1f1f1; padding: 0 5px 0 4px; }
.ready { flex: 1; }
.view { width: 26px; height: 15px; justify-content: center; } .view.on { background: #c6c6c6; }
.zb { font-size: 12px; font-weight: 700; width: 11px; justify-content: center; color: #555; }
.range { appearance: none; width: 67px; height: 9px; margin: 0; background: linear-gradient(#aaa, #aaa) no-repeat center / 100% 1px; }
.range::-webkit-slider-thumb { appearance: none; width: 3px; height: 8px; background: #555; }
.pct { width: 22px; text-align: right; }

.taskbar { display: flex; justify-content: space-between; height: 27px; flex: none; background: linear-gradient(90deg, #3d3d41, #3a4346 25%, #3b4143 45%, #39393a 70%, #39393a 85%, #2d4546 94%, #39393b); border-top: 1px solid #33373a; color: #fff; }
.apps { display: flex; }
.apps button { width: 27px; margin-right: 6px; justify-content: center; position: relative; height: 26px; }
.apps button:first-child { margin-left: 3px; }
.apps .open { border-bottom: 2px solid #60a9e8; padding-top: 2px; }
.badge { position: absolute; left: 13px; top: 14px; font-size: 6px; line-height: 8px; }
.tray { display: flex; align-items: center; gap: 10px; padding-right: 12px; }
.kb { margin-left: 2px; } .tp { margin: 0 3px; }
.lang { width: 10px; text-align: center; margin-right: 2px; }
.clock { text-align: center; line-height: 12px; width: 38px; }
</style>
